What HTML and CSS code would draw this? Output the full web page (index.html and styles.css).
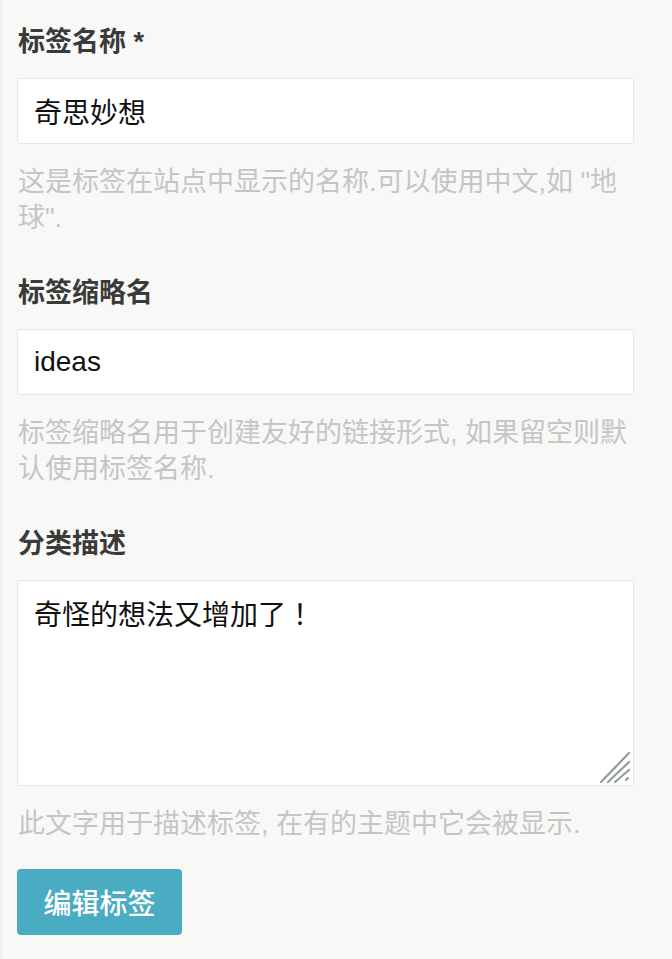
FILE: index.html
```html
<!DOCTYPE html>
<html lang="zh-CN">
<head>
<meta charset="utf-8">
<title>编辑标签</title>
<link rel="stylesheet" href="styles.css">
</head>
<body>
<form class="form">
  <div class="field">
    <label class="label" for="name">标签名称 *</label>
    <input class="control" id="name" type="text" value="奇思妙想">
    <p class="help">这是标签在站点中显示的名称.可以使用中文,如 "地球".</p>
  </div>
  <div class="field">
    <label class="label" for="slug">标签缩略名</label>
    <input class="control" id="slug" type="text" value="ideas">
    <p class="help">标签缩略名用于创建友好的链接形式, 如果留空则默认使用标签名称.</p>
  </div>
  <div class="field field-last">
    <label class="label" for="desc">分类描述</label>
    <div class="area-wrap">
      <textarea class="control area" id="desc" lang="zh-TW">奇怪的想法又增加了！</textarea>
      <svg class="grip" width="32" height="34" viewBox="0 0 32 34">
        <g stroke="#8f9d9d" stroke-width="2.2" stroke-linecap="round">
          <line x1="2" y1="32" x2="30" y2="3"/>
          <line x1="9" y1="32" x2="30" y2="12"/>
          <line x1="16" y1="32" x2="30" y2="20"/>
          <line x1="27" y1="30" x2="29" y2="28"/>
        </g>
      </svg>
    </div>
    <p class="help">此文字用于描述标签, 在有的主题中它会被显示.</p>
  </div>
  <button class="btn" type="button">编辑标签</button>
</form>
</body>
</html>
```
FILE: styles.css
```css
html, body {
  margin: 0;
  padding: 0;
  background: #f8f9f7;
}
body {
  font-family: "Liberation Sans", "Noto Sans CJK SC", sans-serif;
  border-left: 2px solid #eff0ee;
  min-height: 959px;
  box-sizing: border-box;
}
.form {
  padding: 24px 38px 0 15px;
  display: flex;
  flex-direction: column;
}
.field {
  display: flex;
  flex-direction: column;
  margin-bottom: 39px;
}
.field-last {
  margin-bottom: 27px;
}
.label {
  font-size: 27px;
  line-height: 36px;
  font-weight: bold;
  color: #3a3a3a;
  margin-bottom: 18px;
  padding-left: 1px;
}
.control {
  display: block;
  box-sizing: border-box;
  width: 617px;
  height: 66px;
  margin: 0;
  padding: 0 16px;
  border: 1px solid #e6e7e6;
  border-radius: 3px;
  background: #fff;
  font-family: "Liberation Sans", "Noto Sans CJK SC", sans-serif;
  font-size: 28px;
  color: #111;
  outline: none;
}
.area-wrap {
  position: relative;
  width: 617px;
}
.area {
  height: 206px;
  padding: 13px 16px;
  line-height: 44px;
  resize: none;
  overflow: hidden;
  font-family: "Liberation Sans", "Noto Sans CJK TC", sans-serif;
}
.grip {
  position: absolute;
  right: 3px;
  bottom: 2px;
}
.help {
  margin: 20px 0 0;
  font-size: 27px;
  line-height: 36px;
  color: #c3c6c4;
  padding-left: 1px;
}
.btn {
  align-self: flex-start;
  width: 165px;
  height: 66px;
  padding: 0;
  border: none;
  border-radius: 4px;
  background: #4aacc2;
  color: #fff;
  font-family: "Liberation Sans", "Noto Sans CJK SC", sans-serif;
  font-size: 28px;
  font-weight: 500;
}
```
